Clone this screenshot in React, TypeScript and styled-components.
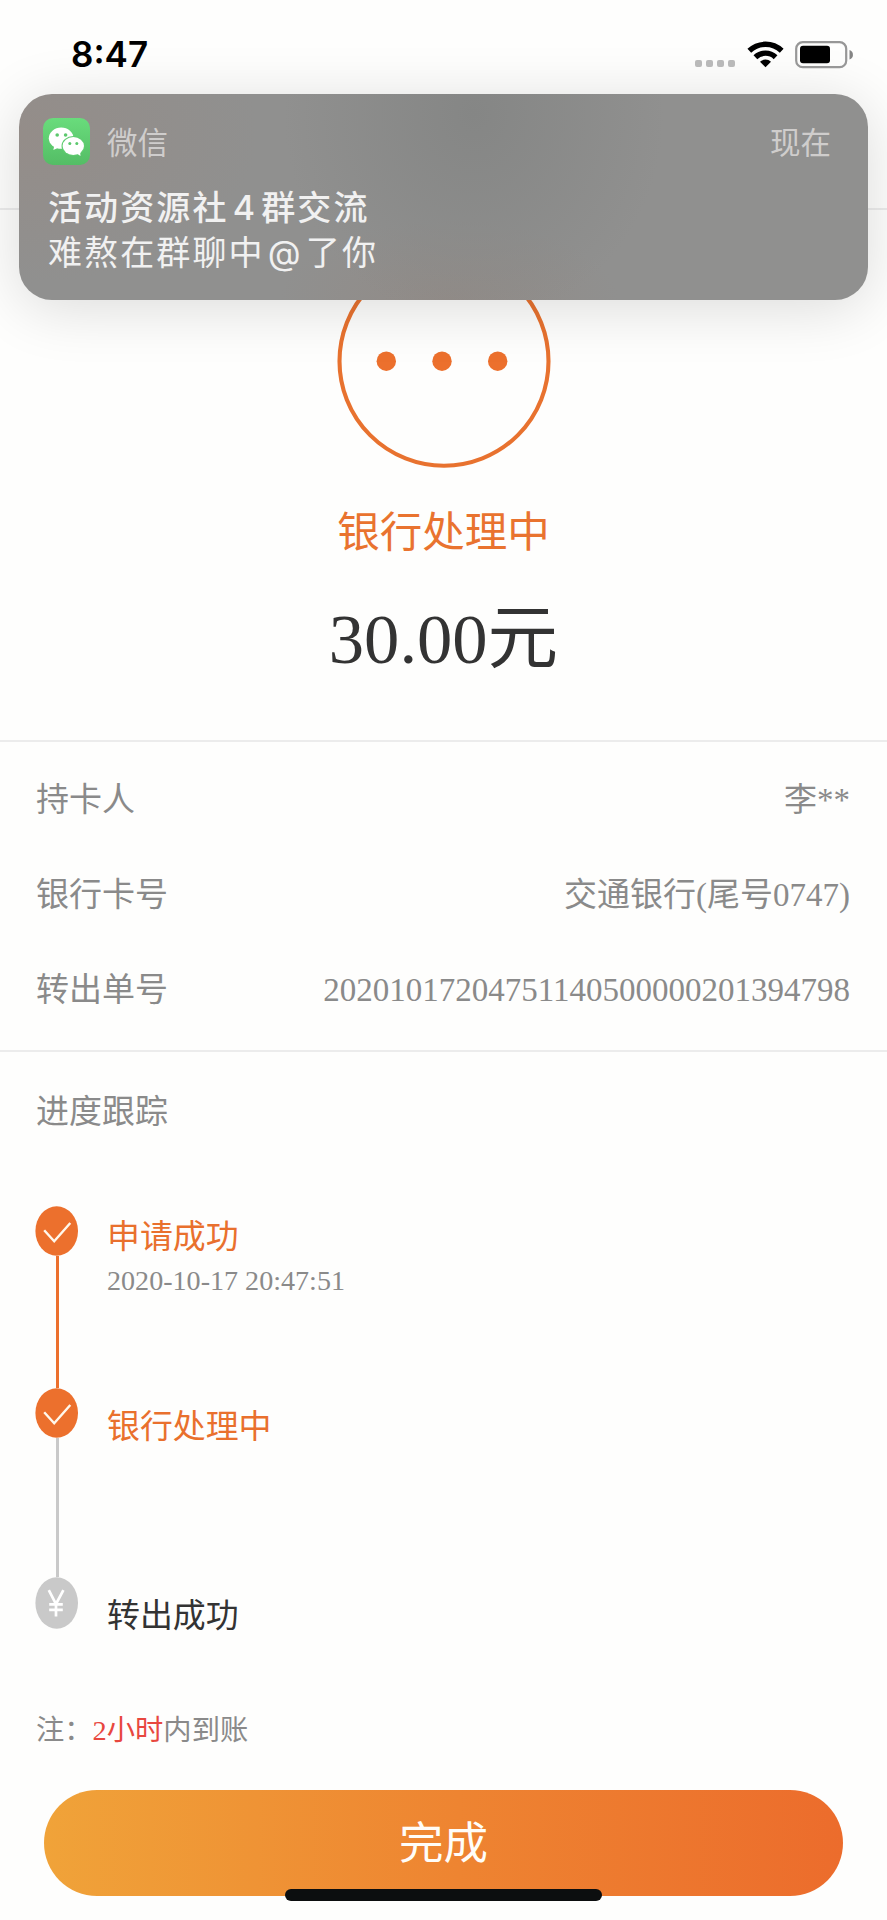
import React from "react";
import styled, { createGlobalStyle } from "styled-components";

const GlobalStyle = createGlobalStyle`
  * { box-sizing: border-box; }
  body { margin: 0; background: #fefefd; }
`;

const serifStack = `"Liberation Serif", "Noto Sans CJK SC", serif`;
const sansStack = `Inter, "Noto Sans CJK SC", sans-serif`;

const Screen = styled.main`
  position: relative;
  width: 887px;
  height: 1920px;
  overflow: hidden;
  display: flex;
  flex-direction: column;
  background: #fefefd;
  color: #8a8a8a;
  font-family: ${serifStack};
  font-size: 33px;
  line-height: 48px;
`;

const StatusBar = styled.header`
  position: relative;
  z-index: 3;
  flex: none;
  height: 109px;
  padding: 41px 34px 0 71px;
  display: flex;
  justify-content: space-between;
  align-items: flex-start;
`;

const Clock = styled.time`
  color: #000;
  font: 600 35px/27px ${sansStack};
`;

const StatusIcons = styled.svg`
  display: block;
  width: 160px;
  height: 28px;
`;

const NavBar = styled.div`
  flex: none;
  height: 101px;
  border-bottom: 2px solid #ececec;
`;

const Notification = styled.aside`
  position: absolute;
  z-index: 2;
  top: 94px;
  left: 19px;
  width: 849px;
  height: 206px;
  padding: 24px 37px 0 24px;
  border-radius: 33px;
  color: #f1f1f1;
  background:
    radial-gradient(ellipse 190px 210px at 455px 20px, #858685 0%, rgba(133, 134, 133, 0) 100%),
    radial-gradient(ellipse 170px 80px at 430px 206px, #918b87 0%, rgba(145, 139, 135, 0) 100%),
    radial-gradient(ellipse 240px 150px at 0 40px, #948d89 0%, rgba(148, 141, 137, 0) 100%),
    #90908f;
  box-shadow: 0 8px 60px rgba(0, 0, 0, 0.14);
  font-family: ${sansStack};
`;

const NotificationHead = styled.div`
  display: flex;
  align-items: center;
  height: 47px;
  color: #cfcdcc;
  font-size: 30.5px;
  line-height: 47px;
`;

const AppIcon = styled.svg`
  width: 47px;
  height: 47px;
  margin-right: 17px;
`;

const HeadLabel = styled.span<{ $grow?: boolean }>`
  flex: ${(p) => (p.$grow ? 1 : "none")};
  padding-top: 2px;
`;

const NotificationText = styled.p<{ $strong?: boolean }>`
  margin: ${(p) => (p.$strong ? "20px 0 0 5px" : "0 0 0 5px")};
  font-size: 34px;
  line-height: 45px;
  letter-spacing: 2.1px;
  word-spacing: ${(p) => (p.$strong ? -7 : -8.5)}px;
  font-weight: ${(p) => (p.$strong ? 500 : 400)};
`;

const Summary = styled.section`
  flex: none;
  height: 532px;
  padding-top: 44px;
  display: flex;
  flex-direction: column;
  align-items: center;
  border-bottom: 2px solid #ececec;
`;

const PendingIcon = styled.svg`
  width: 214px;
  height: 214px;
  flex: none;
`;

const StatusTitle = styled.h1`
  margin: 34px 0 0;
  color: #e9732f;
  font-weight: 400;
  font-size: 42.5px;
  line-height: 62px;
`;

const Amount = styled.div`
  margin-top: 25px;
  color: #333;
  font-size: 70.6px;
  line-height: 100px;
`;

const Details = styled.dl`
  flex: none;
  height: 310px;
  margin: 0;
  padding: 11px 37px 0 36px;
  border-bottom: 2px solid #ececec;
`;

const DetailRow = styled.div`
  display: flex;
  justify-content: space-between;
  align-items: center;
  height: 94.7px;

  dt, dd { margin: 0; }
`;

const Tracking = styled.section`
  flex: none;
  padding: 36px 35px 0;
`;

const TrackingTitle = styled.h2`
  margin: 0 0 70px 1px;
  font-size: 33px;
  font-weight: 400;
  line-height: 48px;
`;

const Step = styled.div<{ $height: number }>`
  display: flex;
  height: ${(p) => p.$height}px;
`;

const Rail = styled.div`
  width: 43px;
  display: flex;
  flex-direction: column;
  align-items: center;
`;

const Marker = styled.svg<{ $height: number }>`
  display: block;
  flex: none;
  width: 43px;
  height: ${(p) => p.$height}px;
`;

const Connector = styled.div<{ $color: string }>`
  flex: 1;
  width: 3px;
  margin-left: 1px;
  background: ${(p) => p.$color};
`;

const StepBody = styled.div<{ $offset: number; $color: string }>`
  padding: ${(p) => p.$offset}px 0 0 29px;
  color: ${(p) => p.$color};
  font-size: 32.9px;
`;

const StepTime = styled.div`
  color: #8a8a8a;
  font-size: 28.1px;
  line-height: 40px;
`;

const Note = styled.p`
  flex: none;
  margin: 82px 0 0 36px;
  font-size: 28.3px;
  line-height: 40px;

  em { color: #e8473f; font-style: normal; }
`;

const DoneButton = styled.button`
  flex: none;
  align-self: center;
  width: 799px;
  height: 106px;
  margin: 39px 0 0;
  padding: 2px 0 0;
  border: 0;
  border-radius: 53px;
  background: linear-gradient(90deg, #f0a339 0%, #ee8431 52%, #ec6c2c 100%);
  color: #fffdf8;
  font: 44.5px/104px ${serifStack};
`;

const HomeIndicator = styled.div`
  position: absolute;
  left: 285px;
  top: 1889px;
  width: 317px;
  height: 12px;
  border-radius: 6px;
  background: #0c0e0f;
`;

const orange = "#ec702d";
const grey = "#c9c9c9";

function CheckMarker() {
  return (
    <Marker $height={50} viewBox="0 0 43 50">
      <ellipse cx="21.7" cy="25" rx="21.3" ry="24.7" fill={orange} />
      <path d="M9.2 24.2 L19.2 35.2 L35.3 17" fill="none" stroke="#fff8ec" strokeWidth="2.4" />
    </Marker>
  );
}

function YuanMarker() {
  return (
    <Marker $height={52} viewBox="0 0 43 52">
      <ellipse cx="21.7" cy="26" rx="21.3" ry="25.7" fill={grey} />
      <path
        d="M13.8 13.2 L21 27 L28.4 13.2 M21 27 V39.5 M14.2 27.4 H27.8 M14.2 32.8 H27.8"
        fill="none"
        stroke="#fff"
        strokeWidth="2.7"
      />
    </Marker>
  );
}

const details = [
  ["持卡人", "李**"],
  ["银行卡号", "交通银行(尾号0747)"],
  ["转出单号", "20201017204751140500000201394798"],
];

export default function App() {
  return (
    <Screen>
      <GlobalStyle />
      <StatusBar>
        <Clock>8:47</Clock>
        <StatusIcons viewBox="0 0 160 28">
          {[2, 13, 24, 35].map((x) => (
            <rect key={x} x={x} y="19" width="7" height="7" rx="2" fill="#b9b9b9" />
          ))}
          <g fill="none" stroke="#000" strokeWidth="5.4">
            <path d="M56.3 9.8 A23.5 23.5 0 0 1 88.7 9.8" />
            <path d="M62.4 16.2 A14.6 14.6 0 0 1 82.6 16.2" />
          </g>
          <path d="M72.5 26.2 L67 20.7 A8 8 0 0 1 78 20.7 Z" />
          <rect x="103.2" y="1.2" width="50" height="25" rx="6.5" fill="none" stroke="#979797" strokeWidth="2.2" />
          <rect x="107" y="4.8" width="30" height="17.4" rx="3" />
          <path d="M156.5 9 A5 5 0 0 1 156.5 18.5 Z" fill="#858585" />
        </StatusIcons>
      </StatusBar>
      <NavBar />

      <Notification>
        <NotificationHead>
          <AppIcon viewBox="0 0 47 47">
            <defs>
              <linearGradient id="appGreen" x1="0" y1="0" x2="0" y2="1">
                <stop offset="0" stopColor="#69dc7c" />
                <stop offset="1" stopColor="#54bd65" />
              </linearGradient>
            </defs>
            <rect width="47" height="47" rx="10" fill="url(#appGreen)" />
            <ellipse cx="18.2" cy="20.2" rx="12.4" ry="10.6" fill="#fff" />
            <path d="M11.5 27 L10.3 32 L17 29Z" fill="#fff" />
            <ellipse cx="30.3" cy="28" rx="11.8" ry="9.9" fill="#5fcd70" />
            <ellipse cx="30.3" cy="28" rx="10.7" ry="8.9" fill="#fff" />
            <path d="M33 35 L37.5 37.9 L37 33Z" fill="#fff" />
            <g fill="#5cc86d">
              <circle cx="14.2" cy="17" r="1.8" />
              <circle cx="22.6" cy="17" r="1.8" />
              <circle cx="26.8" cy="25.4" r="1.5" />
              <circle cx="33.8" cy="25.4" r="1.5" />
            </g>
          </AppIcon>
          <HeadLabel $grow>微信</HeadLabel>
          <HeadLabel>现在</HeadLabel>
        </NotificationHead>
        <NotificationText $strong>活动资源社 4 群交流</NotificationText>
        <NotificationText>难熬在群聊中 @ 了你</NotificationText>
      </Notification>

      <Summary>
        <PendingIcon viewBox="0 0 214 214">
          <circle cx="107" cy="107.2" r="104.5" fill="none" stroke="#e8722f" strokeWidth="4.1" />
          {[49.3, 105, 160.7].map((x) => (
            <circle key={x} cx={x} cy="107.2" r="9.7" fill={orange} />
          ))}
        </PendingIcon>
        <StatusTitle>银行处理中</StatusTitle>
        <Amount>30.00元</Amount>
      </Summary>

      <Details>
        {details.map(([label, value]) => (
          <DetailRow key={label}>
            <dt>{label}</dt>
            <dd>{value}</dd>
          </DetailRow>
        ))}
      </Details>

      <Tracking>
        <TrackingTitle>进度跟踪</TrackingTitle>
        <Step $height={182}>
          <Rail>
            <CheckMarker />
            <Connector $color={orange} />
          </Rail>
          <StepBody $offset={7} $color="#e9702d">
            申请成功
            <StepTime>2020-10-17 20:47:51</StepTime>
          </StepBody>
        </Step>
        <Step $height={189}>
          <Rail>
            <CheckMarker />
            <Connector $color={grey} />
          </Rail>
          <StepBody $offset={15} $color="#e9702d">银行处理中</StepBody>
        </Step>
        <Step $height={52}>
          <Rail>
            <YuanMarker />
          </Rail>
          <StepBody $offset={15} $color="#333">转出成功</StepBody>
        </Step>
      </Tracking>

      <Note>
        注：<em>2小时</em>内到账
      </Note>
      <DoneButton>完成</DoneButton>
      <HomeIndicator />
    </Screen>
  );
}
